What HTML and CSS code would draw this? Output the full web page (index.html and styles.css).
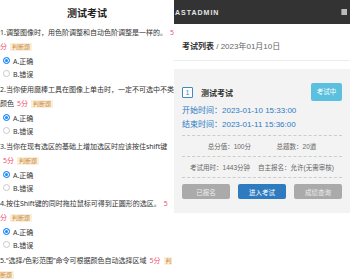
FILE: index.html
```html
<!DOCTYPE html>
<html lang="zh-CN">
<head>
  <meta charset="UTF-8" />
  <title>测试考试</title>
  <link rel="stylesheet" href="styles.css">
</head>
<body>
  <div class="page">
    <div class="mobile">
      <h1 class="mobile-title">测试考试</h1>

      <div class="question">
        <p class="q-text">1.调整图像时，用色阶调整和自动色阶调整是一样的。<span class="score">5<wbr>分</span><span class="tag">判断题</span></p>
        <div class="option"><span class="radio checked"></span>A.正确</div>
        <div class="option"><span class="radio"></span>B.错误</div>
      </div>

      <div class="question">
        <p class="q-text">2.当你使用魔棒工具在图像上单击时，一定不可选中不类颜色<span class="score">5<wbr>分</span><span class="tag">判断题</span></p>
        <div class="option"><span class="radio checked"></span>A.正确</div>
        <div class="option"><span class="radio"></span>B.错误</div>
      </div>

      <div class="question">
        <p class="q-text">3.当你在现有选区的基础上增加选区时应该按住shift键<span class="score">5<wbr>分</span><span class="tag">判断题</span></p>
        <div class="option"><span class="radio checked"></span>A.正确</div>
        <div class="option"><span class="radio"></span>B.错误</div>
      </div>

      <div class="question">
        <p class="q-text">4.按住Shift键的同时拖拉鼠标可得到正圆形的选区。<span class="score">5<wbr>分</span><span class="tag">判断题</span></p>
        <div class="option"><span class="radio checked"></span>A.正确</div>
        <div class="option"><span class="radio"></span>B.错误</div>
      </div>

      <div class="question">
        <p class="q-text">5.“选择/色彩范围”命令可根据颜色自动选择区域<span class="score">5<wbr>分</span><span class="tag">判<wbr>断题</span></p>
        <div class="option"><span class="radio checked"></span>A.正确</div>
        <div class="option"><span class="radio"></span>B.错误</div>
      </div>
    </div>

    <div class="admin">
      <div class="topbar">
        <span class="logo">ASTADMIN</span>
        <span class="avatar"></span>
      </div>

      <div class="page-head"><b>考试列表</b> / 2023年01月10日</div>

      <div class="exam-card">
        <div class="exam-head">
          <span class="num">1</span>
          <span class="exam-name">测试考试</span>
          <span class="status">考试中</span>
        </div>
        <div class="times">
          <div>开始时间：2023-01-10 15:33:00</div>
          <div>结束时间：2023-01-11 15:36:00</div>
        </div>
        <div class="info-row">
          <span>总分值：100分</span>
          <span>总题数：20道</span>
        </div>
        <div class="info-row last">
          <span>考试用时：1443分钟</span>
          <span>自主报名：允许(无需审核)</span>
        </div>
        <div class="actions">
          <button class="btn gray">已报名</button>
          <button class="btn blue">进入考试</button>
          <button class="btn gray">成绩查询</button>
        </div>
      </div>
    </div>
  </div>
</body>
</html>
```

FILE: styles.css
```css
body {
  margin: 0;
  font-family: "Noto Sans", "Noto Sans CJK SC", sans-serif;
  background: #fff;
}
.page {
  display: flex;
  width: 350px;
  height: 280px;
  overflow: hidden;
}

/* left: mobile exam page */
.mobile {
  width: 174px;
  flex: none;
  overflow: hidden;
  color: #333;
}
.mobile-title {
  margin: 0;
  height: 26px;
  line-height: 26px;
  text-align: center;
  font-size: 10px;
  font-weight: bold;
  color: #222;
}
.question {
  margin-bottom: 3px;
}
.q-text {
  margin: 0;
  font-size: 7px;
  line-height: 14px;
  line-break: anywhere;
}
.score {
  margin-left: 3px;
  color: #f0506e;
}
.tag {
  margin-left: 3px;
  padding: 0 2px;
  font-size: 6px;
  color: #c98a3e;
  background: #fcefd9;
}
.option {
  display: flex;
  align-items: center;
  gap: 3px;
  height: 13px;
  padding-left: 3px;
  font-size: 7px;
}
.radio {
  width: 5px;
  height: 5px;
  border: 1px solid #c8c9cc;
  border-radius: 50%;
}
.radio.checked {
  border-color: #1989fa;
  background: #1989fa;
  box-shadow: inset 0 0 0 1px #fff;
}

/* right: admin panel */
.admin {
  flex: 1;
  font-family: "Liberation Sans", "Noto Sans CJK SC", sans-serif;
}
.topbar {
  height: 24px;
  background: #333;
  display: flex;
  align-items: center;
  justify-content: space-between;
  padding: 0 3px 0 1px;
}
.logo {
  color: #e6e6e6;
  font-size: 7px;
  font-weight: bold;
  letter-spacing: 1px;
}
.avatar {
  width: 5px;
  height: 6px;
  background: #bbb;
  border-left: 1px solid #888;
}
.page-head {
  padding: 16px 8px 6px;
  line-height: 14px;
  font-size: 8px;
  color: #666;
  border-bottom: 1px solid #ececec;
}
.page-head b {
  color: #333;
}
.exam-card {
  margin-top: 8px;
  background: #f3f3f3;
  padding: 14px 8px 14px;
}
.exam-head {
  display: flex;
  align-items: center;
  height: 18px;
}
.num {
  width: 9px;
  height: 9px;
  line-height: 9px;
  text-align: center;
  font-size: 7px;
  color: #3c8dbc;
  background: #fff;
  border: 1px solid #3c8dbc;
  border-radius: 1px;
}
.exam-name {
  flex: 1;
  margin-left: 8px;
  font-size: 8px;
  font-weight: bold;
  color: #333;
}
.status {
  width: 31px;
  height: 18px;
  line-height: 18px;
  text-align: center;
  font-size: 6.5px;
  color: #fff;
  background: #5bc0de;
  border-radius: 2px;
}
.times {
  margin: 3px 0 4px;
  font-size: 8px;
  line-height: 13.5px;
  color: #2d7bc4;
}
.info-row {
  display: flex;
  justify-content: space-evenly;
  align-items: center;
  height: 20px;
  font-size: 6.5px;
  color: #666;
  border-top: 1px dashed #ccc;
}
.info-row.last {
  border-bottom: 1px dashed #ccc;
}
.actions {
  display: flex;
  gap: 8px;
  margin-top: 6px;
}
.btn {
  flex: 1;
  height: 15px;
  padding: 0;
  border: none;
  border-radius: 2px;
  font-family: inherit;
  font-size: 6.5px;
  color: #fff;
}
.btn.gray {
  background: #aaa;
  color: #eee;
}
.btn.blue {
  background: #2f7bbf;
}
```
